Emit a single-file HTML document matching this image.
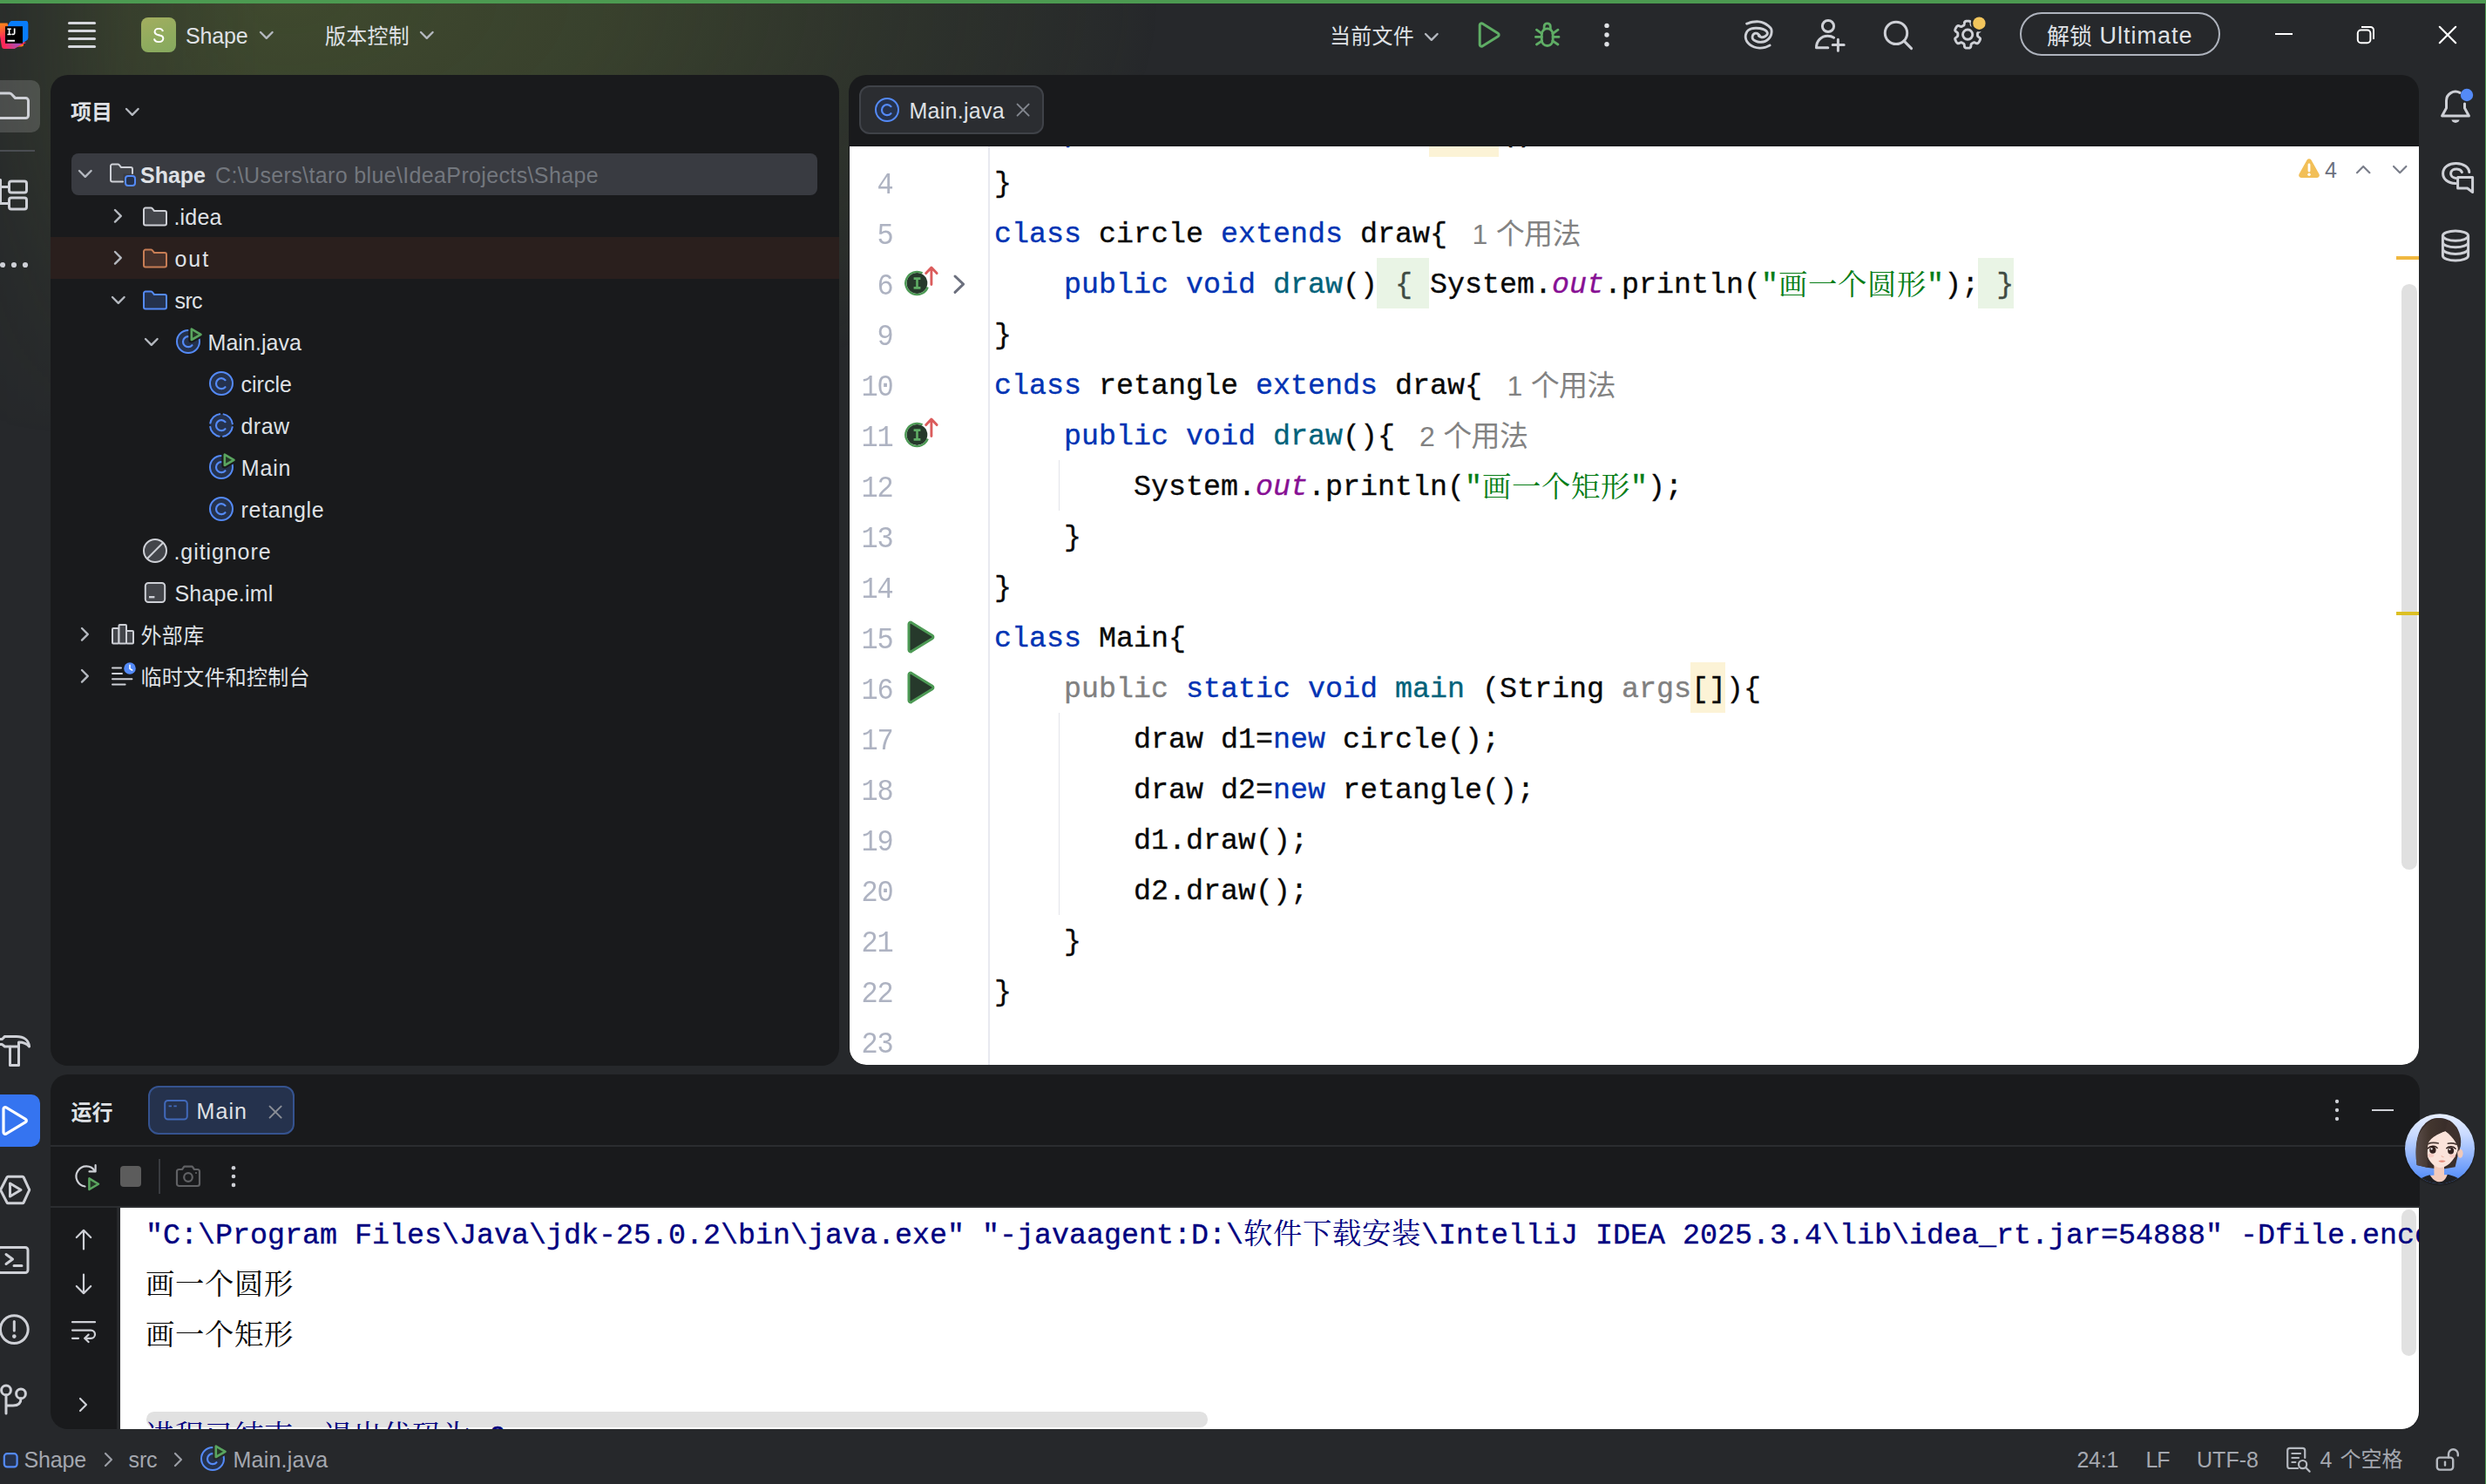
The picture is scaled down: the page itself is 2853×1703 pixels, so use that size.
<!DOCTYPE html>
<html lang="zh-CN">
<head>
<meta charset="utf-8">
<title>Shape – Main.java</title>
<style>
html,body{margin:0;padding:0;background:#26282b;width:2853px;height:1703px;overflow:hidden;}
#app{position:relative;width:2853px;height:1703px;overflow:hidden;background:#26282b;font-family:"Liberation Sans","Noto Sans CJK SC",sans-serif;}
.p{position:absolute;overflow:hidden;}
.t{position:absolute;white-space:pre;display:block;}
.m{font-family:"Liberation Mono","Noto Serif CJK SC",monospace;-webkit-text-stroke:0.35px;}
.ln{transform:scaleY(1.1);transform-origin:0 24.5px;-webkit-text-stroke:0;}
.r{position:absolute;}
.i{position:absolute;overflow:visible;}
.k{color:#0033b3}.f{color:#00627a}.s{color:#067d17}.g{color:#808080}.o{color:#871094;font-style:italic}
.cj{letter-spacing:0.67px;-webkit-text-stroke:0;}
.c2{position:relative;top:2px}
.fo{color:#3f4b43}
</style>
</head>
<body>
<div id="app">
<div class="r" style="left:0;top:0;width:1500px;height:700px;background:radial-gradient(ellipse 1000px 520px at 330px 0px, rgba(98,120,50,0.42) 0%, rgba(98,120,50,0.315) 37%, rgba(98,120,50,0.145) 67%, rgba(98,120,50,0.03) 95%, rgba(98,120,50,0) 100%);-webkit-mask-image:linear-gradient(to right, rgba(0,0,0,0.22) 0px, rgba(0,0,0,0.45) 60px, rgba(0,0,0,0.78) 140px, #000 300px);mask-image:linear-gradient(to right, rgba(0,0,0,0.22) 0px, rgba(0,0,0,0.45) 60px, rgba(0,0,0,0.78) 140px, #000 300px);"></div>
<div id="titlebar" class="p" style="left:0;top:0;width:2853px;height:85px;overflow:visible"><svg class="i" style="left:0px;top:24px;" width="34" height="34" viewBox="0 0 34 34"><defs><linearGradient id="lg1" x1="0" y1="0" x2="0.25" y2="1"><stop offset="0.08" stop-color="#fc801d"/><stop offset="0.6" stop-color="#fe2857"/></linearGradient><linearGradient id="lg2" x1="0" y1="1" x2="1" y2="0"><stop offset="0" stop-color="#fe2857"/><stop offset="0.55" stop-color="#7b61e8"/><stop offset="1" stop-color="#087cfa"/></linearGradient></defs><path d="M-2 6 H9 L27 24 V27 a2.5 2.5 0 0 1-2.5 2.5 H19 Z" fill="#fc801d"/><path d="M-2 5 a3 3 0 0 1 3-2.5 H8.5 L13 20 L30 25 L16 32 H5 a3 3 0 0 1-3-2.3 Z" fill="url(#lg1)"/><path d="M13.5 0 H29 a3.2 3.2 0 0 1 3.2 3.2 V19.5 a3 3 0 0 1-1.3 2.5 L16.5 32 H6 L9 5 Z" fill="url(#lg2)"/><path d="M13.5 0 H29 a3.2 3.2 0 0 1 3.2 3.2 V19.5 a3 3 0 0 1-1.3 2.5 L24 26 V6.5 H8.5 L11 1.5 a3 3 0 0 1 2.5-1.5 Z" fill="#087cfa"/><rect x="6" y="6.2" width="20" height="19.6" fill="#000"/><path d="M8.4 8.6 h4.4 v1.5 h-1.4 v4.6 h1.4 v1.5 h-4.4 v-1.5 h1.4 v-4.6 h-1.4 z M15.8 8.6 h1.7 v5.2 c0 1.6-.9 2.5-2.4 2.5 c-.8 0-1.5-.3-2-.9 l1-1.1 c.3.3.6.5.9.5 c.5 0 .8-.3.8-1.1z" fill="#fff"/><rect x="8.4" y="21.8" width="8.6" height="1.9" fill="#fff"/></svg>
<svg class="i" style="left:76px;top:22px;" width="36" height="36" viewBox="0 0 36 36"><path d="M3.5 4.5 H32.5" stroke="#d5d7dc" stroke-width="3.1" stroke-linecap="round"/><path d="M3.5 13.5 H32.5" stroke="#d5d7dc" stroke-width="3.1" stroke-linecap="round"/><path d="M3.5 22.5 H32.5" stroke="#d5d7dc" stroke-width="3.1" stroke-linecap="round"/><path d="M3.5 31.5 H32.5" stroke="#d5d7dc" stroke-width="3.1" stroke-linecap="round"/></svg>
<div class="r" style="left:162px;top:20px;width:40px;height:40px;background:linear-gradient(160deg,#a3ae5f 0%,#8fab5e 60%,#86a95f 100%);border-radius:8px;"></div>
<span id="t1" class="t" style="left:174.2px;top:28.9px;font-size:24.5px;line-height:24.5px;color:#ffffff;transform:scaleX(0.87);transform-origin:50% 50%;">S</span>
<span id="t2" class="t" style="left:213.0px;top:28.8px;font-size:25px;line-height:25px;color:#dfe1e5;letter-spacing:-0.16px;">Shape</span>
<svg class="i" style="left:296.2px;top:34.1px;" width="19.6" height="12.8" viewBox="0 0 19.6 12.8"><path d="M3 3 L9.8 9.8 L16.6 3" fill="none" stroke="#b4b8bf" stroke-width="2.4" stroke-linecap="round" stroke-linejoin="round"/></svg>
<span id="t3" class="t" style="left:373.0px;top:29.7px;font-size:24px;line-height:24px;color:#dfe1e5;letter-spacing:0.25px;">版本控制</span>
<svg class="i" style="left:480.2px;top:34.1px;" width="19.6" height="12.8" viewBox="0 0 19.6 12.8"><path d="M3 3 L9.8 9.8 L16.6 3" fill="none" stroke="#b4b8bf" stroke-width="2.4" stroke-linecap="round" stroke-linejoin="round"/></svg>
<span id="t4" class="t" style="left:1526.0px;top:29.7px;font-size:24px;line-height:24px;color:#dfe1e5;letter-spacing:0.25px;">当前文件</span>
<svg class="i" style="left:1632.5px;top:36.1px;" width="19.6" height="12.8" viewBox="0 0 19.6 12.8"><path d="M3 3 L9.8 9.8 L16.6 3" fill="none" stroke="#b4b8bf" stroke-width="2.4" stroke-linecap="round" stroke-linejoin="round"/></svg>
<svg class="i" style="left:1692px;top:22px;" width="36" height="36" viewBox="0 0 36 36"><path d="M6.2 6.8 a2 2 0 0 1 3-1.7 L27.2 16.3 a2 2 0 0 1 0 3.4 L9.2 30.9 a2 2 0 0 1-3-1.7 Z" fill="none" stroke="#5fad65" stroke-width="3" stroke-linejoin="round"/></svg>
<svg class="i" style="left:1758px;top:21px;" width="36" height="36" viewBox="0 0 36 36"><g fill="none" stroke="#5fad65" stroke-width="2.8" stroke-linecap="round" stroke-linejoin="round"><path d="M11.3 18.2 a6.4 6.4 0 0 1 12.8 0 V25.1 a6.4 6.4 0 0 1-12.8 0 Z"/><path d="M14.1 12.6 V9.4 a3.6 3.6 0 0 1 7.2 0 V12.6"/><path d="M11.5 17.6 L5.4 13.2 M23.9 17.6 L30 13.2 M11.3 21.4 H4.4 M24.1 21.4 H31 M11.6 25.8 L5.5 30 M23.8 25.8 L29.9 30"/></g></svg>
<svg class="i" style="left:1836px;top:22px;" width="16" height="36" viewBox="0 0 16 36"><circle cx="8" cy="7.4" r="2.7" fill="#dfe1e5"/><circle cx="8" cy="18" r="2.7" fill="#dfe1e5"/><circle cx="8" cy="28.7" r="2.7" fill="#dfe1e5"/></svg>
<svg class="i" style="left:2000px;top:22px;" width="36" height="36" viewBox="0 0 36 36"><g fill="none" stroke="#ced0d6" stroke-width="2.9" stroke-linecap="round" stroke-linejoin="round"><path d="M4.60 5.20 C5.67 4.88 8.73 3.68 11.00 3.30 C13.27 2.92 15.93 2.68 18.20 2.90 C20.47 3.12 22.73 3.80 24.60 4.60 C26.47 5.40 28.07 6.60 29.40 7.70 C30.73 8.80 31.98 9.98 32.60 11.20 C33.22 12.42 33.20 13.63 33.10 15.00 C33.00 16.37 32.62 18.08 32.00 19.40 C31.38 20.72 30.43 21.92 29.40 22.90 C28.37 23.88 27.12 24.73 25.80 25.30 C24.48 25.87 22.93 26.18 21.50 26.30 C20.07 26.42 18.50 26.28 17.20 26.00 C15.90 25.72 14.63 25.13 13.70 24.60 C12.77 24.07 12.03 23.45 11.60 22.80 C11.17 22.15 11.10 21.43 11.10 20.70 C11.10 19.97 11.27 19.07 11.60 18.40 C11.93 17.73 12.57 17.08 13.10 16.70 C13.63 16.32 14.23 16.15 14.80 16.10 C15.37 16.05 15.97 16.18 16.50 16.40 C17.03 16.62 17.53 17.02 18.00 17.40 C18.47 17.78 19.08 18.48 19.30 18.70"/><path d="M31.10 30.00 C30.18 30.40 27.57 31.88 25.60 32.40 C23.63 32.92 21.37 33.17 19.30 33.10 C17.23 33.03 15.08 32.67 13.20 32.00 C11.32 31.33 9.43 30.22 8.00 29.10 C6.57 27.98 5.40 26.70 4.60 25.30 C3.80 23.90 3.32 22.18 3.20 20.70 C3.08 19.22 3.38 17.72 3.90 16.40 C4.42 15.08 5.28 13.73 6.30 12.80 C7.32 11.87 8.58 11.23 10.00 10.80 C11.42 10.37 13.20 10.25 14.80 10.20 C16.40 10.15 18.10 10.25 19.60 10.50 C21.10 10.75 22.60 11.22 23.80 11.70 C25.00 12.18 26.05 12.75 26.80 13.40 C27.55 14.05 28.12 14.87 28.30 15.60 C28.48 16.33 28.28 17.15 27.90 17.80 C27.52 18.45 26.68 19.05 26.00 19.50 C25.32 19.95 24.55 20.30 23.80 20.50 C23.05 20.70 22.20 20.78 21.50 20.70 C20.80 20.62 20.15 20.30 19.60 20.00 C19.05 19.70 18.43 19.08 18.20 18.90"/></g></svg>
<svg class="i" style="left:2081px;top:21px;" width="40" height="42" viewBox="0 0 40 42"><g fill="none" stroke="#ced0d6" stroke-width="3" stroke-linecap="round" stroke-linejoin="round"><circle cx="17" cy="9" r="6.6"/><path d="M16.8 33.7 H3.5 C3.5 26 9 20.3 16.5 20.3 C19.3 20.3 21.8 21 23.6 22.2"/><path d="M28.4 24.2 V37.2 M22.2 30.6 H35.2"/></g></svg>
<svg class="i" style="left:2158px;top:20px;" width="42" height="42" viewBox="0 0 42 42"><g fill="none" stroke="#ced0d6" stroke-width="3" stroke-linecap="round"><circle cx="18" cy="17.9" r="12.7"/><path d="M27.2 27.1 L35.6 35.6"/></g></svg>
<svg class="i" style="left:2238.7px;top:20.2px;" width="44" height="42" viewBox="0 0 44 42"><g fill="none" stroke="#ced0d6" stroke-width="2.9" stroke-linejoin="round"><path d="M30.48 19.65 L30.48 20.14 L30.48 20.64 L30.52 21.15 L30.78 21.70 L31.62 22.42 L32.90 23.33 L33.57 24.20 L33.62 24.92 L33.44 25.57 L33.19 26.20 L32.90 26.81 L32.57 27.40 L32.22 27.98 L31.84 28.54 L31.43 29.07 L30.95 29.55 L30.30 29.86 L29.22 29.72 L27.78 29.07 L26.74 28.70 L26.13 28.75 L25.67 28.96 L25.24 29.21 L24.81 29.46 L24.38 29.71 L23.95 29.95 L23.54 30.25 L23.19 30.75 L22.99 31.84 L22.83 33.40 L22.42 34.41 L21.82 34.81 L21.17 34.99 L20.50 35.08 L19.83 35.13 L19.15 35.15 L18.47 35.13 L17.80 35.08 L17.13 34.99 L16.48 34.81 L15.88 34.41 L15.47 33.40 L15.31 31.84 L15.11 30.75 L14.76 30.25 L14.35 29.95 L13.92 29.71 L13.49 29.46 L13.06 29.21 L12.63 28.96 L12.17 28.75 L11.56 28.70 L10.52 29.07 L9.08 29.72 L8.00 29.86 L7.35 29.55 L6.87 29.07 L6.46 28.54 L6.08 27.98 L5.73 27.40 L5.40 26.81 L5.11 26.20 L4.86 25.57 L4.68 24.92 L4.73 24.20 L5.40 23.33 L6.68 22.42 L7.52 21.70 L7.78 21.15 L7.82 20.64 L7.82 20.14 L7.82 19.65 L7.82 19.16 L7.82 18.66 L7.78 18.15 L7.52 17.60 L6.68 16.88 L5.40 15.97 L4.73 15.10 L4.68 14.38 L4.86 13.73 L5.11 13.10 L5.40 12.49 L5.73 11.90 L6.08 11.32 L6.46 10.76 L6.87 10.23 L7.35 9.75 L8.00 9.44 L9.08 9.58 L10.52 10.23 L11.56 10.60 L12.17 10.55 L12.63 10.34 L13.06 10.09 L13.49 9.84 L13.92 9.59 L14.35 9.35 L14.76 9.05 L15.11 8.55 L15.31 7.46 L15.47 5.90 L15.88 4.89 L16.48 4.49 L17.13 4.31 L17.80 4.22 L18.47 4.17 L19.15 4.15 L19.83 4.17 L20.50 4.22 L21.17 4.31 L21.82 4.49 L22.42 4.89 L22.83 5.90 L22.99 7.46 L23.19 8.55 L23.54 9.05 L23.95 9.35 L24.38 9.59 L24.81 9.84 L25.24 10.09 L25.67 10.34 L26.13 10.55 L26.74 10.60 L27.78 10.23 L29.22 9.58 L30.30 9.44 L30.95 9.75 L31.43 10.23 L31.84 10.76 L32.22 11.32 L32.57 11.90 L32.90 12.49 L33.19 13.10 L33.44 13.73 L33.62 14.38 L33.57 15.10 L32.90 15.97 L31.62 16.88 L30.78 17.60 L30.52 18.15 L30.48 18.66 L30.48 19.16 Z"/><circle cx="19.15" cy="19.65" r="5.6"/></g><circle cx="32.4" cy="6.7" r="9.7" fill="#26282b"/><circle cx="32.4" cy="6.7" r="7.2" fill="#f2c55c"/></svg>
<div class="r" style="left:2318px;top:14px;width:230px;height:50px;background:transparent;border-radius:25px;border:2.6px solid #aeb3bd;box-sizing:border-box;"></div>
<span id="t5" class="t" style="left:2349.0px;top:29.2px;font-size:26px;line-height:26px;color:#dfe1e5;">解锁</span>
<span id="t6" class="t" style="left:2409.5px;top:28.1px;font-size:27px;line-height:27px;color:#dfe1e5;letter-spacing:1.00px;">Ultimate</span>
<div class="r" style="left:2611px;top:38px;width:20px;height:2px;background:#ffffff;"></div>
<svg class="i" style="left:2703px;top:28px;" width="24" height="24" viewBox="0 0 24 24"><g fill="none" stroke="#fff" stroke-width="2"><rect x="2.8" y="6.6" width="14.6" height="14.6" rx="3.6"/><path d="M7 3 H17.4 a3.6 3.6 0 0 1 3.6 3.6 V17"/></g></svg>
<svg class="i" style="left:2797px;top:28px;" width="24" height="24" viewBox="0 0 24 24"><path d="M2.8 2.8 L21.2 21.2 M21.2 2.8 L2.8 21.2" stroke="#fff" stroke-width="2.2" stroke-linecap="round"/></svg></div>
<div id="leftstripe" class="p" style="left:0;top:0;width:58px;height:1640px;overflow:hidden"><div class="r" style="left:-14px;top:92px;width:60px;height:60px;background:rgba(255,255,255,0.155);border-radius:10px;"></div>
<svg class="i" style="left:-6px;top:102px;" width="44" height="40" viewBox="0 0 44 40"><path d="M3.5 8 a3 3 0 0 1 3-3 H17 a3 3 0 0 1 2.2 1 L23.6 10.6 H35.5 a3 3 0 0 1 3 3 V30.5 a3 3 0 0 1-3 3 H6.5 a3 3 0 0 1-3-3 Z" fill="none" stroke="#ced0d6" stroke-width="3" stroke-linejoin="round"/></svg>
<div class="r" style="left:0px;top:172px;width:40px;height:2px;background:#4a4d52;"></div>
<svg class="i" style="left:-6px;top:204px;" width="40" height="40" viewBox="0 0 40 40"><g fill="none" stroke="#ced0d6" stroke-width="3" stroke-linejoin="round"><rect x="16.5" y="4" width="20" height="13" rx="2.5"/><rect x="16.5" y="23" width="20" height="13" rx="2.5"/><path d="M6.5 2.5 V29.5 H16.5 M6.5 10.5 H16.5" stroke-linecap="round"/></g></svg>
<svg class="i" style="left:-4px;top:298px;" width="40" height="12" viewBox="0 0 40 12"><circle cx="7" cy="6" r="3.1" fill="#ced0d6"/><circle cx="20" cy="6" r="3.1" fill="#ced0d6"/><circle cx="33" cy="6" r="3.1" fill="#ced0d6"/></svg>
<svg class="i" style="left:-6px;top:1186px;" width="42" height="40" viewBox="0 0 42 40"><g fill="none" stroke="#ced0d6" stroke-width="3" stroke-linejoin="round"><path d="M3 6.5 H8.5 L11.5 3.4 H25 C33 3.4 39 7.4 39.6 15 C37 11.6 33 9.9 27.5 9.9 V36.4 H17.5 V15 H11.5 L8.5 12.6 H3"/><path d="M17.5 15 H27.5"/></g></svg>
<div class="r" style="left:-14px;top:1256px;width:60px;height:60px;background:#3574f0;border-radius:10px;"></div>
<svg class="i" style="left:0px;top:1266px;" width="36" height="40" viewBox="0 0 36 40"><path d="M4 6.6 a2 2 0 0 1 3-1.7 L29.4 18.3 a2 2 0 0 1 0 3.4 L7 35.1 a2 2 0 0 1-3-1.7 Z" fill="none" stroke="#fff" stroke-width="3.2" stroke-linejoin="round"/></svg>
<svg class="i" style="left:-6px;top:1346px;" width="44" height="40" viewBox="0 0 44 40"><g fill="none" stroke="#ced0d6" stroke-width="3" stroke-linejoin="round"><path d="M6.5 19.5 L14 5 a1.5 1.5 0 0 1 1.3-.8 H31.8 a1.5 1.5 0 0 1 1.3.8 L39.5 18.8 a1.5 1.5 0 0 1 0 1.4 L33.1 34 a1.5 1.5 0 0 1-1.3.8 H15.3 a1.5 1.5 0 0 1-1.3-.8 Z"/><path d="M17.5 12 V27 L30 19.5 Z"/></g></svg>
<svg class="i" style="left:-6px;top:1428px;" width="42" height="36" viewBox="0 0 42 36"><g fill="none" stroke="#ced0d6" stroke-width="3" stroke-linejoin="round" stroke-linecap="round"><rect x="4" y="3.5" width="34" height="29" rx="3"/><path d="M13 11.5 L20.5 17 L13 22.5 M22 24.5 H31"/></g></svg>
<svg class="i" style="left:-4px;top:1506px;" width="40" height="40" viewBox="0 0 40 40"><g fill="none" stroke="#ced0d6" stroke-width="3" stroke-linecap="round"><circle cx="20.3" cy="19.6" r="15.9"/><path d="M20.3 10.5 V21"/></g><circle cx="20.3" cy="27.6" r="2.3" fill="#ced0d6"/></svg>
<svg class="i" style="left:-4px;top:1586px;" width="40" height="40" viewBox="0 0 40 40"><g fill="none" stroke="#ced0d6" stroke-width="3" stroke-linecap="round"><circle cx="11" cy="9.4" r="5.4"/><circle cx="28" cy="13.4" r="5.4"/><path d="M11 15 V36 M11 27 H19 C25 27 28 24 28 19"/></g></svg></div>
<div id="project" class="p" style="left:58px;top:85.5px;width:905px;height:1137.5px;background:#191a1c;border-radius:20px"><span id="t7" class="t" style="left:23.0px;top:31.4px;font-size:24px;line-height:24px;color:#dfe1e5;font-weight:700;">项目</span>
<svg class="i" style="left:84.2px;top:36.4px;" width="19.6" height="12.8" viewBox="0 0 19.6 12.8"><path d="M3 3 L9.8 9.8 L16.6 3" fill="none" stroke="#b4b8bf" stroke-width="2.4" stroke-linecap="round" stroke-linejoin="round"/></svg>
<div class="r" style="left:24px;top:90.5px;width:856px;height:48px;background:#393b41;border-radius:8px;"></div>
<div class="r" style="left:0px;top:186.5px;width:905px;height:48px;background:#2a1f1d;"></div>
<svg class="i" style="left:30px;top:107.9px;" width="19.6" height="12.8" viewBox="0 0 19.6 12.8"><path d="M3 3 L9.8 9.8 L16.6 3" fill="none" stroke="#b4b8bf" stroke-width="2.4" stroke-linecap="round" stroke-linejoin="round"/></svg>
<svg class="i" style="left:66px;top:97.9px;" width="34" height="34" viewBox="0 0 34 34"><path d="M3 23.6 V7.5 a2 2 0 0 1 2-2 H11.2 a2 2 0 0 1 1.5 .7 L15 9 H26 a2 2 0 0 1 2 2 V16.5 H17.5 V25.6 H5 a2 2 0 0 1-2-2 Z" fill="#43454a" stroke="none"/><path d="M17 25.6 H5 a2 2 0 0 1-2-2 V7.5 a2 2 0 0 1 2-2 H11.2 a2 2 0 0 1 1.5 .7 L15 9 H26 a2 2 0 0 1 2 2 V16" fill="none" stroke="#ced0d6" stroke-width="2" stroke-linejoin="round" stroke-linecap="round"/><rect x="20" y="19" width="11" height="11" rx="3" fill="#25324d" stroke="#548af7" stroke-width="2"/></svg>
<span id="t8" class="t" style="left:103.0px;top:103.1px;font-size:25px;line-height:25px;color:#dfe1e5;font-weight:700;letter-spacing:-0.01px;">Shape</span>
<span id="t9" class="t" style="left:189.0px;top:103.1px;font-size:25px;line-height:25px;color:#73777e;letter-spacing:0.36px;">C:\Users\taro blue\IdeaProjects\Shape</span>
<svg class="i" style="left:71.2px;top:152.7px;" width="12.8" height="19.6" viewBox="0 0 12.8 19.6"><path d="M3 3 L9.8 9.8 L3 16.6" fill="none" stroke="#b4b8bf" stroke-width="2.4" stroke-linecap="round" stroke-linejoin="round"/></svg>
<svg class="i" style="left:104px;top:146.5px;" width="32" height="32" viewBox="0 0 32 32"><path d="M3 8.5 a2 2 0 0 1 2-2 H11.2 a2 2 0 0 1 1.5 .7 L15 10 H27 a2 2 0 0 1 2 2 V24.6 a2 2 0 0 1-2 2 H5 a2 2 0 0 1-2-2 Z" fill="#43454a" stroke="#ced0d6" stroke-width="2" stroke-linejoin="round"/></svg>
<span id="t10" class="t" style="left:141.5px;top:151.7px;font-size:25px;line-height:25px;color:#dfe1e5;letter-spacing:0.16px;">.idea</span>
<svg class="i" style="left:71.2px;top:200.7px;" width="12.8" height="19.6" viewBox="0 0 12.8 19.6"><path d="M3 3 L9.8 9.8 L3 16.6" fill="none" stroke="#b4b8bf" stroke-width="2.4" stroke-linecap="round" stroke-linejoin="round"/></svg>
<svg class="i" style="left:104px;top:194.5px;" width="32" height="32" viewBox="0 0 32 32"><path d="M3 8.5 a2 2 0 0 1 2-2 H11.2 a2 2 0 0 1 1.5 .7 L15 10 H27 a2 2 0 0 1 2 2 V24.6 a2 2 0 0 1-2 2 H5 a2 2 0 0 1-2-2 Z" fill="#45302a" stroke="#c77d55" stroke-width="2" stroke-linejoin="round"/></svg>
<span id="t11" class="t" style="left:142.5px;top:199.7px;font-size:25px;line-height:25px;color:#dfe1e5;letter-spacing:1.91px;">out</span>
<svg class="i" style="left:68.2px;top:252.1px;" width="19.6" height="12.8" viewBox="0 0 19.6 12.8"><path d="M3 3 L9.8 9.8 L16.6 3" fill="none" stroke="#b4b8bf" stroke-width="2.4" stroke-linecap="round" stroke-linejoin="round"/></svg>
<svg class="i" style="left:104px;top:242.5px;" width="32" height="32" viewBox="0 0 32 32"><path d="M3 8.5 a2 2 0 0 1 2-2 H11.2 a2 2 0 0 1 1.5 .7 L15 10 H27 a2 2 0 0 1 2 2 V24.6 a2 2 0 0 1-2 2 H5 a2 2 0 0 1-2-2 Z" fill="#25324d" stroke="#548af7" stroke-width="2" stroke-linejoin="round"/></svg>
<span id="t12" class="t" style="left:142.5px;top:247.7px;font-size:25px;line-height:25px;color:#dfe1e5;letter-spacing:-0.61px;">src</span>
<svg class="i" style="left:106.2px;top:300.1px;" width="19.6" height="12.8" viewBox="0 0 19.6 12.8"><path d="M3 3 L9.8 9.8 L16.6 3" fill="none" stroke="#b4b8bf" stroke-width="2.4" stroke-linecap="round" stroke-linejoin="round"/></svg>
<svg class="i" style="left:140px;top:288.5px;" width="36" height="36" viewBox="0 0 36 36"><circle cx="18" cy="18" r="13" fill="#25324d" stroke="#548af7" stroke-width="2"/><path d="M22.46 14.19 A6 6 0 1 0 22.46 22.21" fill="none" stroke="#548af7" stroke-width="2.2" stroke-linecap="round"/><path d="M21.8 3.7 V16 L32.5 9.85 Z" fill="#191a1c" stroke="#191a1c" stroke-width="7" stroke-linejoin="round"/><path d="M21.8 3.7 V16 L32.5 9.85 Z" fill="#253627" stroke="#5aa55f" stroke-width="2.6" stroke-linejoin="round"/></svg>
<span id="t13" class="t" style="left:180.5px;top:295.7px;font-size:25px;line-height:25px;color:#dfe1e5;letter-spacing:0.06px;">Main.java</span>
<svg class="i" style="left:177.5px;top:336.5px;" width="36" height="36" viewBox="0 0 36 36"><circle cx="18" cy="18" r="13" fill="#25324d" stroke="#548af7" stroke-width="2"/><path d="M22.46 14.19 A6 6 0 1 0 22.46 22.21" fill="none" stroke="#548af7" stroke-width="2.2" stroke-linecap="round"/></svg>
<span id="t14" class="t" style="left:218.5px;top:343.7px;font-size:25px;line-height:25px;color:#dfe1e5;letter-spacing:0.03px;">circle</span>
<svg class="i" style="left:177.5px;top:384.5px;" width="36" height="36" viewBox="0 0 36 36"><circle cx="18" cy="18" r="13" fill="#25324d"/><circle cx="18" cy="18" r="13" fill="none" stroke="#548af7" stroke-width="2" stroke-dasharray="17.4 3.02" stroke-dashoffset="18.91"/><path d="M22.46 14.19 A6 6 0 1 0 22.46 22.21" fill="none" stroke="#548af7" stroke-width="2.2" stroke-linecap="round"/></svg>
<span id="t15" class="t" style="left:218.5px;top:391.7px;font-size:25px;line-height:25px;color:#dfe1e5;letter-spacing:0.45px;">draw</span>
<svg class="i" style="left:177.5px;top:432.5px;" width="36" height="36" viewBox="0 0 36 36"><circle cx="18" cy="18" r="13" fill="#25324d" stroke="#548af7" stroke-width="2"/><path d="M22.46 14.19 A6 6 0 1 0 22.46 22.21" fill="none" stroke="#548af7" stroke-width="2.2" stroke-linecap="round"/><path d="M21.8 3.7 V16 L32.5 9.85 Z" fill="#191a1c" stroke="#191a1c" stroke-width="7" stroke-linejoin="round"/><path d="M21.8 3.7 V16 L32.5 9.85 Z" fill="#253627" stroke="#5aa55f" stroke-width="2.6" stroke-linejoin="round"/></svg>
<span id="t16" class="t" style="left:218.8px;top:439.7px;font-size:25px;line-height:25px;color:#dfe1e5;letter-spacing:0.80px;">Main</span>
<svg class="i" style="left:177.5px;top:480.5px;" width="36" height="36" viewBox="0 0 36 36"><circle cx="18" cy="18" r="13" fill="#25324d" stroke="#548af7" stroke-width="2"/><path d="M22.46 14.19 A6 6 0 1 0 22.46 22.21" fill="none" stroke="#548af7" stroke-width="2.2" stroke-linecap="round"/></svg>
<span id="t17" class="t" style="left:218.5px;top:487.7px;font-size:25px;line-height:25px;color:#dfe1e5;letter-spacing:0.70px;">retangle</span>
<svg class="i" style="left:103.8px;top:530px;" width="32" height="32" viewBox="0 0 32 32"><circle cx="16" cy="16" r="13" fill="#43454a" stroke="#ced0d6" stroke-width="2"/><path d="M6.8 25.2 L25.2 6.8" stroke="#ced0d6" stroke-width="2"/></svg>
<span id="t18" class="t" style="left:141.5px;top:535.7px;font-size:25px;line-height:25px;color:#dfe1e5;letter-spacing:0.91px;">.gitignore</span>
<svg class="i" style="left:104px;top:578.5px;" width="32" height="32" viewBox="0 0 32 32"><rect x="4.8" y="5" width="22.4" height="22" rx="3.5" fill="#43454a" stroke="#ced0d6" stroke-width="2"/><rect x="9" y="20" width="6.4" height="2.4" fill="#ced0d6"/></svg>
<span id="t19" class="t" style="left:142.5px;top:583.7px;font-size:25px;line-height:25px;color:#dfe1e5;letter-spacing:0.20px;">Shape.iml</span>
<svg class="i" style="left:33.2px;top:632.7px;" width="12.8" height="19.6" viewBox="0 0 12.8 19.6"><path d="M3 3 L9.8 9.8 L3 16.6" fill="none" stroke="#b4b8bf" stroke-width="2.4" stroke-linecap="round" stroke-linejoin="round"/></svg>
<svg class="i" style="left:67px;top:626.5px;" width="32" height="32" viewBox="0 0 32 32"><g fill="#43454a" stroke="#ced0d6" stroke-width="2" stroke-linejoin="round"><rect x="4" y="9" width="7.5" height="17.5" rx="1"/><rect x="11.5" y="5" width="8.5" height="21.5" rx="1"/><rect x="20" y="12" width="8" height="14.5" rx="1"/></g></svg>
<span id="t20" class="t" style="left:103.5px;top:632.4px;font-size:24px;line-height:24px;color:#dfe1e5;letter-spacing:0.35px;">外部库</span>
<svg class="i" style="left:33.2px;top:680.7px;" width="12.8" height="19.6" viewBox="0 0 12.8 19.6"><path d="M3 3 L9.8 9.8 L3 16.6" fill="none" stroke="#b4b8bf" stroke-width="2.4" stroke-linecap="round" stroke-linejoin="round"/></svg>
<svg class="i" style="left:67px;top:672.5px;" width="36" height="36" viewBox="0 0 36 36"><g stroke="#ced0d6" stroke-width="2" stroke-linecap="round"><path d="M4 8.6 H14 M4 15 H15 M4 21.2 H26.4 M4 27.4 H18.6"/></g><circle cx="24" cy="9" r="8.6" fill="#191a1c"/><circle cx="24" cy="9" r="6.8" fill="#548af7"/><path d="M24 5.2 V9.4 L26.6 11" stroke="#fff" stroke-width="1.6" fill="none" stroke-linecap="round"/></svg>
<span id="t21" class="t" style="left:103.5px;top:680.4px;font-size:24px;line-height:24px;color:#dfe1e5;letter-spacing:0.3px;">临时文件和控制台</span></div>
<div id="editor" class="p" style="left:974px;top:85.5px;width:1802px;height:1136.5px;background:#191a1c;border-radius:20px"><div class="r" style="left:12px;top:12.5px;width:212px;height:56px;background:#2b2d31;border-radius:12px;border:2px solid #3f4248;box-sizing:border-box;"></div>
<svg class="i" style="left:26px;top:22.7px;" width="36" height="36" viewBox="0 0 36 36"><circle cx="18" cy="18" r="13" fill="#25324d" stroke="#548af7" stroke-width="2"/><path d="M22.46 14.19 A6 6 0 1 0 22.46 22.21" fill="none" stroke="#548af7" stroke-width="2.2" stroke-linecap="round"/></svg>
<span id="t22" class="t" style="left:69.5px;top:29.3px;font-size:25px;line-height:25px;color:#dfe1e5;letter-spacing:0.28px;">Main.java</span>
<svg class="i" style="left:190px;top:30.5px;" width="20" height="20" viewBox="0 0 20 20"><path d="M3.6 3.6 L16.6 16.6 M16.6 3.6 L3.6 16.6" stroke="#82868e" stroke-width="2" stroke-linecap="round"/></svg>
<div class="p" style="left:1.2px;top:82.1px;width:1800.8px;height:1054px;background:#fff;border-radius:0 0 19px 19px;">
<div class="r" style="left:664.8px;top:0.4px;width:80px;height:12.5px;background:#fcf3d6;"></div>
<div class="r" style="left:159.1px;top:0.4px;width:1.6px;height:1054px;background:#e8e9f0;"></div>
<div class="r" style="left:604.8px;top:128.4px;width:60px;height:58px;background:#e9f4e5;"></div>
<div class="r" style="left:1295.3px;top:128.4px;width:40.5px;height:58px;background:#e9f4e5;"></div>
<div class="r" style="left:965.3px;top:592.4px;width:40px;height:58px;background:#fcf3d6;"></div>
<div class="r" style="left:239.5px;top:360.9px;width:1.8px;height:57.5px;background:#e3e4ea;"></div>
<div class="r" style="left:239.5px;top:650.4px;width:1.8px;height:232px;background:#e3e4ea;"></div>
<span class="t m ln" style="left:31.4px;top:30.1px;font-size:32px;line-height:32px;letter-spacing:-1.2px;color:#aeb3c2;">4</span>
<span class="t m ln" style="left:31.4px;top:88.1px;font-size:32px;line-height:32px;letter-spacing:-1.2px;color:#aeb3c2;">5</span>
<span class="t m ln" style="left:31.4px;top:146.1px;font-size:32px;line-height:32px;letter-spacing:-1.2px;color:#aeb3c2;">6</span>
<span class="t m ln" style="left:31.4px;top:204.1px;font-size:32px;line-height:32px;letter-spacing:-1.2px;color:#aeb3c2;">9</span>
<span class="t m ln" style="left:13.4px;top:262.1px;font-size:32px;line-height:32px;letter-spacing:-1.2px;color:#aeb3c2;">10</span>
<span class="t m ln" style="left:13.4px;top:320.1px;font-size:32px;line-height:32px;letter-spacing:-1.2px;color:#aeb3c2;">11</span>
<span class="t m ln" style="left:13.4px;top:378.1px;font-size:32px;line-height:32px;letter-spacing:-1.2px;color:#aeb3c2;">12</span>
<span class="t m ln" style="left:13.4px;top:436.1px;font-size:32px;line-height:32px;letter-spacing:-1.2px;color:#aeb3c2;">13</span>
<span class="t m ln" style="left:13.4px;top:494.1px;font-size:32px;line-height:32px;letter-spacing:-1.2px;color:#aeb3c2;">14</span>
<span class="t m ln" style="left:13.4px;top:552.1px;font-size:32px;line-height:32px;letter-spacing:-1.2px;color:#aeb3c2;">15</span>
<span class="t m ln" style="left:13.4px;top:610.1px;font-size:32px;line-height:32px;letter-spacing:-1.2px;color:#aeb3c2;">16</span>
<span class="t m ln" style="left:13.4px;top:668.1px;font-size:32px;line-height:32px;letter-spacing:-1.2px;color:#aeb3c2;">17</span>
<span class="t m ln" style="left:13.4px;top:726.1px;font-size:32px;line-height:32px;letter-spacing:-1.2px;color:#aeb3c2;">18</span>
<span class="t m ln" style="left:13.4px;top:784.1px;font-size:32px;line-height:32px;letter-spacing:-1.2px;color:#aeb3c2;">19</span>
<span class="t m ln" style="left:13.4px;top:842.1px;font-size:32px;line-height:32px;letter-spacing:-1.2px;color:#aeb3c2;">20</span>
<span class="t m ln" style="left:13.4px;top:900.1px;font-size:32px;line-height:32px;letter-spacing:-1.2px;color:#aeb3c2;">21</span>
<span class="t m ln" style="left:13.4px;top:958.1px;font-size:32px;line-height:32px;letter-spacing:-1.2px;color:#aeb3c2;">22</span>
<span class="t m ln" style="left:13.4px;top:1016.1px;font-size:32px;line-height:32px;letter-spacing:-1.2px;color:#aeb3c2;">23</span>
<span class="t m" style="left:165.8px;top:-30.6px;font-size:33.33px;line-height:33.33px;color:#080808;"><span class="k">    public abstract void </span><span class="f">draw</span>();</span>
<span class="t m" style="left:165.8px;top:27.4px;font-size:33.33px;line-height:33.33px;color:#080808;">}</span>
<span class="t m" style="left:165.8px;top:85.4px;font-size:33.33px;line-height:33.33px;color:#080808;"><span class="k">class</span> circle <span class="k">extends</span> draw{</span>
<span id="t23" class="t" style="left:714.3px;top:85.1px;font-size:32px;line-height:32px;color:#828282;">1</span>
<span id="t24" class="t" style="left:741.6px;top:84.9px;font-size:33px;line-height:33px;color:#828282;letter-spacing:-0.7px;">个用法</span>
<span class="t m" style="left:165.8px;top:143.4px;font-size:33.33px;line-height:33.33px;color:#080808;"><span class="k">    public void </span><span class="f">draw</span>() <span class="fo">{</span> System.<span class="o">out</span>.println(<span class="s">"</span><span class="s cj c2">画一个圆形</span><span class="s">"</span>); <span class="fo">}</span></span>
<span class="t m" style="left:165.8px;top:201.4px;font-size:33.33px;line-height:33.33px;color:#080808;">}</span>
<span class="t m" style="left:165.8px;top:259.4px;font-size:33.33px;line-height:33.33px;color:#080808;"><span class="k">class</span> retangle <span class="k">extends</span> draw{</span>
<span id="t25" class="t" style="left:754.3px;top:259.1px;font-size:32px;line-height:32px;color:#828282;">1</span>
<span id="t26" class="t" style="left:781.6px;top:258.9px;font-size:33px;line-height:33px;color:#828282;letter-spacing:-0.7px;">个用法</span>
<span class="t m" style="left:165.8px;top:317.4px;font-size:33.33px;line-height:33.33px;color:#080808;"><span class="k">    public void </span><span class="f">draw</span>(){</span>
<span id="t27" class="t" style="left:653.8px;top:317.1px;font-size:32px;line-height:32px;color:#828282;">2</span>
<span id="t28" class="t" style="left:681.1px;top:316.9px;font-size:33px;line-height:33px;color:#828282;letter-spacing:-0.7px;">个用法</span>
<span class="t m" style="left:165.8px;top:375.4px;font-size:33.33px;line-height:33.33px;color:#080808;">        System.<span class="o">out</span>.println(<span class="s">"</span><span class="s cj c2">画一个矩形</span><span class="s">"</span>);</span>
<span class="t m" style="left:165.8px;top:433.4px;font-size:33.33px;line-height:33.33px;color:#080808;">    }</span>
<span class="t m" style="left:165.8px;top:491.4px;font-size:33.33px;line-height:33.33px;color:#080808;">}</span>
<span class="t m" style="left:165.8px;top:549.4px;font-size:33.33px;line-height:33.33px;color:#080808;"><span class="k">class</span> Main{</span>
<span class="t m" style="left:165.8px;top:607.4px;font-size:33.33px;line-height:33.33px;color:#080808;"><span class="g">    public </span><span class="k">static void </span><span class="f">main</span> (String <span class="g">args</span>[]){</span>
<span class="t m" style="left:165.8px;top:665.4px;font-size:33.33px;line-height:33.33px;color:#080808;">        draw d1=<span class="k">new</span> circle();</span>
<span class="t m" style="left:165.8px;top:723.4px;font-size:33.33px;line-height:33.33px;color:#080808;">        draw d2=<span class="k">new</span> retangle();</span>
<span class="t m" style="left:165.8px;top:781.4px;font-size:33.33px;line-height:33.33px;color:#080808;">        d1.draw();</span>
<span class="t m" style="left:165.8px;top:839.4px;font-size:33.33px;line-height:33.33px;color:#080808;">        d2.draw();</span>
<span class="t m" style="left:165.8px;top:897.4px;font-size:33.33px;line-height:33.33px;color:#080808;">    }</span>
<span class="t m" style="left:165.8px;top:955.4px;font-size:33.33px;line-height:33.33px;color:#080808;">}</span>
<svg class="i" style="left:60.8px;top:133.4px;" width="44" height="44" viewBox="0 0 44 44"><circle cx="16.4" cy="24" r="11.9" fill="#26392b"/><path d="M22.55 12.43 A13.1 13.1 0 1 0 28.71 28.48" fill="none" stroke="#4d9a55" stroke-width="2.4" stroke-linecap="butt"/><path d="M12.6 18.6 H20.4 M12.6 29.4 H20.4 M16.5 18.6 V29.4" stroke="#5fad65" stroke-width="2.6" fill="none"/><path d="M32.9 25.6 V6.8 M26.7 12.6 L32.9 6 L39.1 12.6" stroke="#db5c5c" stroke-width="2.9" fill="none" stroke-linecap="round" stroke-linejoin="round"/></svg>
<svg class="i" style="left:60.8px;top:307.4px;" width="44" height="44" viewBox="0 0 44 44"><circle cx="16.4" cy="24" r="11.9" fill="#26392b"/><path d="M22.55 12.43 A13.1 13.1 0 1 0 28.71 28.48" fill="none" stroke="#4d9a55" stroke-width="2.4" stroke-linecap="butt"/><path d="M12.6 18.6 H20.4 M12.6 29.4 H20.4 M16.5 18.6 V29.4" stroke="#5fad65" stroke-width="2.6" fill="none"/><path d="M32.9 25.6 V6.8 M26.7 12.6 L32.9 6 L39.1 12.6" stroke="#db5c5c" stroke-width="2.9" fill="none" stroke-linecap="round" stroke-linejoin="round"/></svg>
<svg class="i" style="left:117.5px;top:146.2px;" width="15.6" height="24.4" viewBox="0 0 15.6 24.4"><path d="M3 3 L12.6 12.2 L3 21.4" fill="none" stroke="#6c707e" stroke-width="3" stroke-linecap="round" stroke-linejoin="round"/></svg>
<svg class="i" style="left:62.8px;top:543.1px;" width="40" height="40" viewBox="0 0 40 40"><path d="M5 5 a2 2 0 0 1 3-1.6 L32 18.3 a2 2 0 0 1 0 3.4 L8 36.6 a2 2 0 0 1-3-1.6 Z" fill="#26392b" stroke="#4d9a55" stroke-width="3" stroke-linejoin="round"/></svg>
<svg class="i" style="left:62.8px;top:601.1px;" width="40" height="40" viewBox="0 0 40 40"><path d="M5 5 a2 2 0 0 1 3-1.6 L32 18.3 a2 2 0 0 1 0 3.4 L8 36.6 a2 2 0 0 1-3-1.6 Z" fill="#26392b" stroke="#4d9a55" stroke-width="3" stroke-linejoin="round"/></svg>
<svg class="i" style="left:1660.8px;top:12.4px;" width="28" height="26" viewBox="0 0 28 26"><path d="M11.6 3.6 a2.8 2.8 0 0 1 4.8 0 L25.5 19.8 a2.8 2.8 0 0 1-2.4 4.2 H4.9 a2.8 2.8 0 0 1-2.4-4.2 Z" fill="#f2bf57"/><path d="M14 9 V16" stroke="#fff" stroke-width="2.8" stroke-linecap="round"/><circle cx="14" cy="20.2" r="1.7" fill="#fff"/></svg>
<span id="t29" class="t" style="left:1692.8px;top:15.6px;font-size:25px;line-height:25px;color:#6c707e;">4</span>
<svg class="i" style="left:1727.2px;top:20px;" width="20.4" height="13.2" viewBox="0 0 20.4 13.2"><path d="M3 10.2 L10.2 3 L17.4 10.2" fill="none" stroke="#7a7e8a" stroke-width="2.2" stroke-linecap="round" stroke-linejoin="round"/></svg>
<svg class="i" style="left:1768.6px;top:20px;" width="20.4" height="13.2" viewBox="0 0 20.4 13.2"><path d="M3 3 L10.2 10.2 L17.4 3" fill="none" stroke="#7a7e8a" stroke-width="2.2" stroke-linecap="round" stroke-linejoin="round"/></svg>
<div class="r" style="left:1780.8px;top:158.4px;width:17.6px;height:671.7px;background:#e0e0e0;border-radius:8.8px;"></div>
<div class="r" style="left:1774.8px;top:126.4px;width:26px;height:4px;background:#f0b840;"></div>
<div class="r" style="left:1774.8px;top:534.4px;width:26px;height:4px;background:#dcc024;"></div>
</div></div>
<div id="run" class="p" style="left:58px;top:1233px;width:2719px;height:407px;background:#191a1c;border-radius:20px"><span id="t30" class="t" style="left:23.5px;top:31.5px;font-size:24px;line-height:24px;color:#dfe1e5;font-weight:700;">运行</span>
<div class="r" style="left:112.4px;top:13px;width:167.6px;height:56px;background:#25324d;border-radius:12px;border:2px solid #35538f;box-sizing:border-box;"></div>
<svg class="i" style="left:128px;top:26px;" width="32" height="30" viewBox="0 0 32 30"><rect x="3.2" y="4" width="25.6" height="21.6" rx="3.5" fill="#25324d" stroke="#4169ba" stroke-width="2"/><path d="M7.6 10.4 H11 M13.4 10.4 H16.8" stroke="#4169ba" stroke-width="1.8"/></svg>
<span id="t31" class="t" style="left:167.5px;top:29.8px;font-size:25px;line-height:25px;color:#dfe1e5;letter-spacing:1.08px;">Main</span>
<svg class="i" style="left:247.8px;top:33.2px;" width="20" height="20" viewBox="0 0 20 20"><path d="M3.6 3.6 L16.6 16.6 M16.6 3.6 L3.6 16.6" stroke="#8a8e96" stroke-width="2" stroke-linecap="round"/></svg>
<svg class="i" style="left:2616px;top:22px;" width="16" height="38" viewBox="0 0 16 38"><circle cx="8" cy="9" r="2.15" fill="#ced0d6"/><circle cx="8" cy="19" r="2.15" fill="#ced0d6"/><circle cx="8" cy="29" r="2.15" fill="#ced0d6"/></svg>
<div class="r" style="left:2663.5px;top:40px;width:25.5px;height:2px;background:#ced0d6;"></div>
<div class="r" style="left:0px;top:80.5px;width:2719px;height:2px;background:#2b2d30;"></div>
<svg class="i" style="left:24px;top:99px;" width="36" height="38" viewBox="0 0 36 38"><g fill="none" stroke="#ced0d6" stroke-width="2.2" stroke-linecap="round" stroke-linejoin="round"><path d="M15.5 29.5 A11.6 11.6 0 1 1 27 12"/><path d="M20.5 12.4 H27.6 V5.2"/></g><path d="M20.4 20.4 V33 L31 26.7 Z" fill="#191a1c" stroke="#191a1c" stroke-width="6.4" stroke-linejoin="round"/><path d="M20.4 20.4 V33 L31 26.7 Z" fill="#253627" stroke="#5aa55f" stroke-width="2.5" stroke-linejoin="round"/></svg>
<div class="r" style="left:80px;top:105px;width:24px;height:24px;background:#5c5c5c;border-radius:4px;"></div>
<div class="r" style="left:124.3px;top:97px;width:1.6px;height:40px;background:#393b40;"></div>
<svg class="i" style="left:142px;top:101px;" width="32" height="32" viewBox="0 0 32 32"><g fill="none" stroke="#606164" stroke-width="2.2" stroke-linejoin="round"><path d="M3 10.5 a2.5 2.5 0 0 1 2.5-2.5 H9 L11.4 4.6 H20.6 L23 8 H26.5 a2.5 2.5 0 0 1 2.5 2.5 V24.5 a2.5 2.5 0 0 1-2.5 2.5 H5.5 a2.5 2.5 0 0 1-2.5-2.5 Z"/><circle cx="16" cy="17" r="4.8"/></g><circle cx="25" cy="12" r="1.1" fill="#606164"/></svg>
<svg class="i" style="left:201.8px;top:99px;" width="16" height="36" viewBox="0 0 16 36"><circle cx="8" cy="8.2" r="2.3" fill="#ced0d6"/><circle cx="8" cy="18" r="2.3" fill="#ced0d6"/><circle cx="8" cy="27.9" r="2.3" fill="#ced0d6"/></svg>
<div class="r" style="left:0px;top:151px;width:2719px;height:2px;background:#2b2d30;"></div>
<div class="r" style="left:75.8px;top:153px;width:4.2px;height:254px;background:#26282b;"></div>
<svg class="i" style="left:26px;top:175px;" width="24" height="28" viewBox="0 0 24 28"><path d="M12 3.8 V25.4 M3.8 12 L12 3.8 L20.2 12" fill="none" stroke="#ced0d6" stroke-width="2.2" stroke-linecap="round" stroke-linejoin="round"/></svg>
<svg class="i" style="left:26px;top:227px;" width="24" height="28" viewBox="0 0 24 28"><path d="M12 2.6 V24.2 M3.8 16 L12 24.2 L20.2 16" fill="none" stroke="#ced0d6" stroke-width="2.2" stroke-linecap="round" stroke-linejoin="round"/></svg>
<svg class="i" style="left:22px;top:281px;" width="32" height="28" viewBox="0 0 32 28"><g fill="none" stroke="#ced0d6" stroke-width="2.2" stroke-linecap="round" stroke-linejoin="round"><path d="M3 3.2 H29"/><path d="M3 12.6 H24.4 a4.6 4.6 0 0 1 0 9.2 H17.6"/><path d="M3 21.8 H10"/><path d="M21.6 17.6 L17.2 21.8 L21.6 26"/></g></svg>
<svg class="i" style="left:31px;top:369px;" width="13" height="20" viewBox="0 0 13 20"><path d="M3 3 L10 10 L3 17" fill="none" stroke="#ced0d6" stroke-width="2.2" stroke-linecap="round" stroke-linejoin="round"/></svg>
<div class="p" style="left:80px;top:153px;width:2637.5px;height:253.5px;background:#fff;border-radius:0 0 20px 0;">
<div class="r" style="left:29.5px;top:234.4px;width:1218px;height:17.2px;background:#e1e1e1;border-radius:8.6px;"></div>
<div class="r" style="left:2618px;top:2.2px;width:17.4px;height:167.8px;background:#e1e1e1;border-radius:8.7px;"></div>
<span class="t m" style="left:29.0px;top:15.5px;font-size:33.33px;line-height:33.33px;color:#000080;">"C:\Program Files\Java\jdk-25.0.2\bin\java.exe" "-javaagent:D:\<span class="cj">软件下载安装</span>\IntelliJ IDEA 2025.3.4\lib\idea_rt.jar=54888" -Dfile.encoding=UTF-8 -Dsun.stdout.encoding=UTF-8</span>
<span class="t m" style="left:29.0px;top:73.5px;font-size:33.33px;line-height:33.33px;color:#080808;"><span class="cj">画一个圆形</span></span>
<span class="t m" style="left:29.0px;top:131.5px;font-size:33.33px;line-height:33.33px;color:#080808;"><span class="cj">画一个矩形</span></span>
<span class="t m" style="left:29.0px;top:247.5px;font-size:33.33px;line-height:33.33px;color:#000080;"><span class="cj">进程已结束，退出代码为</span> 0</span>
</div></div>
<div id="rightstripe" class="p" style="left:0;top:0;width:2853px;height:1640px;overflow:visible;pointer-events:none"><svg class="i" style="left:2798px;top:100px;" width="44" height="44" viewBox="0 0 44 44"><g fill="none" stroke="#ced0d6" stroke-width="3" stroke-linecap="round" stroke-linejoin="round"><path d="M25 6.4 a10.5 10.5 0 0 0-15.5 9.2 V24 L4.6 33 H35.4 L30.5 24 V19"/></g><path d="M15.4 37.6 a4.8 4.6 0 0 0 9.2 0 Z" fill="#ced0d6"/><g><circle cx="33" cy="9" r="7.2" fill="#548af7"/></svg>
<svg class="i" style="left:2798px;top:182px;" width="44" height="44" viewBox="0 0 44 44"><g fill="none" stroke="#ced0d6" stroke-width="3" stroke-linecap="round" stroke-linejoin="round"><path d="M20 28.6 C11 28 5.6 23.5 5.6 17 C5.6 9.5 12.5 5.4 21 5.6 C29.5 5.8 35.4 10 35.8 15.6"/><path d="M20.4 22.4 C16.4 22 14.4 19.6 14.6 16.8 C14.9 13.5 18 11.8 21.6 12 C24.6 12.2 26.6 13.6 27.4 15.6"/><path d="M22.6 21.6 H39.6 V38.6 L33.6 34 H22.6 Z"/></g></svg>
<svg class="i" style="left:2798px;top:260px;" width="44" height="44" viewBox="0 0 44 44"><g fill="none" stroke="#ced0d6" stroke-width="3"><ellipse cx="20" cy="10.6" rx="14.6" ry="5.6"/><path d="M5.4 10.6 V33.4 C5.4 36.5 12 39 20 39 C28 39 34.6 36.5 34.6 33.4 V10.6"/><path d="M5.4 18.2 C5.4 21.3 12 23.8 20 23.8 C28 23.8 34.6 21.3 34.6 18.2 M5.4 25.8 C5.4 28.9 12 31.4 20 31.4 C28 31.4 34.6 28.9 34.6 25.8"/></g></svg>
<svg class="i" style="left:2756px;top:1274px;" width="88" height="92" viewBox="0 0 88 92"><defs><linearGradient id="avg" x1="0" y1="0" x2="0" y2="1"><stop offset="0" stop-color="#e6eeff"/><stop offset="0.3" stop-color="#c9daff"/><stop offset="0.62" stop-color="#8fb3fc"/><stop offset="1" stop-color="#4a86f8"/></linearGradient><linearGradient id="avh" x1="0" y1="0" x2="1" y2="0"><stop offset="0" stop-color="#5a4c48"/><stop offset="0.45" stop-color="#43362f"/><stop offset="1" stop-color="#3a2e2a"/></linearGradient><clipPath id="avc"><circle cx="44" cy="44.2" r="40"/></clipPath></defs><circle cx="44" cy="46" r="40.6" fill="rgba(0,0,0,0.18)"/><circle cx="44" cy="44.2" r="40" fill="url(#avg)"/><g clip-path="url(#avc)"><path d="M17.6 63 C15 45 17 25 26 16.7 C31 11 37 9 42.2 9 C48 8.5 52 10.5 55.2 11.9 C60 15 63.5 19 64.9 22.4 C67.5 28 68.5 33 68.1 37.8 C68 41 66.5 44.5 65.7 47.5 L61.6 65.3 L45 68 L28.9 65.7 Z" fill="#3a2e2b"/><ellipse cx="67.4" cy="49.6" rx="3.2" ry="5.2" fill="#f1c9b9"/><path d="M37.4 60 H49 V77 C46 81 40 81 37.4 77 Z" fill="#f3cbbc"/><path d="M30.1 37.8 C31 33 40 27 50.3 24 C57 27.5 62 32 64.9 37.8 C65.5 42 64.8 46 63.3 49.1 C61.5 54 58.8 58 55.2 61.2 C51.5 64.2 47.5 66.3 43.9 66.1 C40.6 65.8 38 64 35.8 62 C32 58.3 30 54.5 29.3 50.7 C28.8 46 29.3 42 30.1 37.8 Z" fill="#fbe3da"/><path d="M31.5 75 C35 87 52 87 53.8 74 Z" fill="#f3cbbc"/><path d="M14 92 C15 80 24 77 32.5 74.2 C36 80 40 82.3 43.9 82.3 C48 82.3 51 79 52.8 73.8 C60 75.5 70 77 74 92 Z" fill="#1e1f23"/><path d="M18 34.5 C20 24 30 12 42.2 9 C47 8.6 51 11 50.3 24 C42 27 33 32 30.6 38 C29.6 45 29.6 55 29.8 65.8 L17.6 63 C16 52 16.8 42 18 34.5 Z" fill="url(#avh)"/><path d="M50.3 24 C51.5 15 53.5 11.5 55.2 11.9 C62 16 67.5 27 68.1 37.8 C67.8 42 66.8 45 65.7 47.5 C65 41 61 32 50.3 24 Z" fill="#3e312d"/><ellipse cx="33.6" cy="52" rx="3.6" ry="2.2" fill="#f6c3bb" opacity="0.7"/><ellipse cx="58.6" cy="52.6" rx="3.4" ry="2.2" fill="#f6c3bb" opacity="0.7"/><ellipse cx="35.9" cy="45.7" rx="3.7" ry="4" fill="#33211e"/><ellipse cx="56.6" cy="46.4" rx="3.5" ry="4" fill="#33211e"/><path d="M30.6 43.8 C33 40.6 38.6 40.4 41 43.4 M51.8 43.8 C54.4 40.9 59.6 41.2 62 44.2" stroke="#2a1b19" stroke-width="1.5" fill="none" stroke-linecap="round"/><circle cx="34.6" cy="44.4" r="1.1" fill="#fff"/><circle cx="55.4" cy="45" r="1.1" fill="#fff"/><path d="M30.4 38.8 C33.5 37.2 38 37.2 42.2 38 M53.4 38.2 C56.6 37.4 60 37.8 63.2 39.2" stroke="#4a3a35" stroke-width="1.7" fill="none" stroke-linecap="round"/><path d="M46.2 52.4 C46.8 53.6 47.4 54 48.2 53.6" stroke="#eebfb0" stroke-width="1.2" fill="none" stroke-linecap="round"/><path d="M42.4 58.3 C44.4 57.2 48.6 57.2 50.6 58.3 C48.8 60.5 44.2 60.5 42.4 58.3 Z" fill="#e88f7f"/></g></svg></div>
<div id="statusbar" class="p" style="left:0;top:0;width:2853px;height:1703px;overflow:visible"><svg class="i" style="left:2px;top:1665px;" width="22" height="22" viewBox="0 0 22 22"><rect x="2.8" y="3.2" width="14.8" height="15.2" rx="3.4" fill="#25324d" stroke="#548af7" stroke-width="2.2"/></svg>
<span id="t32" class="t" style="left:27.5px;top:1662.8px;font-size:25px;line-height:25px;color:#a4a7af;letter-spacing:-0.16px;">Shape</span>
<svg class="i" style="left:118px;top:1665px;" width="13" height="20" viewBox="0 0 13 20"><path d="M3 3 L10 10 L3 17" fill="none" stroke="#9a9da5" stroke-width="2.2" stroke-linecap="round" stroke-linejoin="round"/></svg>
<span id="t33" class="t" style="left:147.5px;top:1662.8px;font-size:25px;line-height:25px;color:#a4a7af;letter-spacing:-0.11px;">src</span>
<svg class="i" style="left:197.5px;top:1665px;" width="13" height="20" viewBox="0 0 13 20"><path d="M3 3 L10 10 L3 17" fill="none" stroke="#9a9da5" stroke-width="2.2" stroke-linecap="round" stroke-linejoin="round"/></svg>
<svg class="i" style="left:226px;top:1656.2px;" width="36" height="36" viewBox="0 0 36 36"><circle cx="18" cy="18" r="13" fill="#25324d" stroke="#548af7" stroke-width="2"/><path d="M22.46 14.19 A6 6 0 1 0 22.46 22.21" fill="none" stroke="#548af7" stroke-width="2.2" stroke-linecap="round"/><path d="M21.8 3.7 V16 L32.5 9.85 Z" fill="#26282b" stroke="#26282b" stroke-width="7" stroke-linejoin="round"/><path d="M21.8 3.7 V16 L32.5 9.85 Z" fill="#253627" stroke="#5aa55f" stroke-width="2.6" stroke-linejoin="round"/></svg>
<span id="t34" class="t" style="left:267.5px;top:1662.8px;font-size:25px;line-height:25px;color:#a4a7af;letter-spacing:0.22px;">Main.java</span>
<span id="t35" class="t" style="left:2383.5px;top:1662.8px;font-size:25px;line-height:25px;color:#a4a7af;letter-spacing:-0.29px;">24:1</span>
<span id="t36" class="t" style="left:2462.5px;top:1662.8px;font-size:25px;line-height:25px;color:#a4a7af;letter-spacing:-1.09px;">LF</span>
<span id="t37" class="t" style="left:2521.0px;top:1662.8px;font-size:25px;line-height:25px;color:#a4a7af;letter-spacing:0.03px;">UTF-8</span>
<svg class="i" style="left:2621px;top:1658px;" width="34" height="34" viewBox="0 0 34 34"><g fill="none" stroke="#b4b8bf" stroke-width="2.2" stroke-linecap="round" stroke-linejoin="round"><path d="M16 27 H6.8 a2.6 2.6 0 0 1-2.6-2.6 V6.4 a2.6 2.6 0 0 1 2.6-2.6 H21.6 a2.6 2.6 0 0 1 2.6 2.6 V15"/><path d="M9.4 10 H19 M9.4 15 H17 M9.4 20 H13.4"/><circle cx="21.6" cy="22.6" r="4.6"/><path d="M25 26 L29.6 30.6"/></g></svg>
<span id="t38" class="t" style="left:2662.5px;top:1662.8px;font-size:25px;line-height:25px;color:#a4a7af;">4</span>
<span id="t39" class="t" style="left:2685.5px;top:1663.3px;font-size:24px;line-height:24px;color:#a4a7af;">个空格</span>
<svg class="i" style="left:2793px;top:1660px;" width="32" height="30" viewBox="0 0 32 30"><g fill="none" stroke="#b4b8bf" stroke-width="2.4" stroke-linecap="round" stroke-linejoin="round"><rect x="3.8" y="12.6" width="18.4" height="14" rx="3"/><path d="M17 12.6 V8.6 a5.4 5.4 0 0 1 10.8 0 V10.4"/><path d="M13 17.6 V21.6"/></g></svg></div>
<div class="r" style="left:0;top:0;width:2853px;height:4px;background:#4c9a51"></div>
<div class="r" style="left:2851.5px;top:0;width:1.5px;height:1703px;background:#4c9a51"></div>
</div>
</body>
</html>
